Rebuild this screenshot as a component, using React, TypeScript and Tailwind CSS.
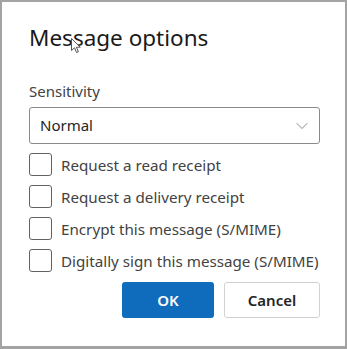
import { ChevronDown } from 'lucide-react'

const OPTIONS = [
  'Request a read receipt',
  'Request a delivery receipt',
  'Encrypt this message (S/MIME)',
  'Digitally sign this message (S/MIME)',
]

export default function App() {
  return (
    <div className="w-[347px] h-[349px] bg-[#a3a3a3] pl-[2px] pt-[2px] pr-[2px] pb-[3px]" style={{ fontFamily: '"Noto Sans", "Open Sans", sans-serif' }}>
      <div className="relative w-full h-full bg-white pl-[27px] pr-[25px] pt-[21px] text-[#242424]">
        <h1 className="text-[22.5px] leading-[30px] font-normal text-[#1a1a1a]">Message options</h1>

        <div className="mt-[28px] text-[15px] leading-[20px] text-[#424242]">Sensitivity</div>

        <div className="mt-[6px] h-[37px] border border-[#8a8a8a] rounded-[3px] flex items-center justify-between pl-[10px] pr-[7px]">
          <span className="text-[15px] text-[#242424]">Normal</span>
          <ChevronDown size={20} strokeWidth={0.9} className="text-[#616161]" />
        </div>

        <div className="mt-[9px] flex flex-col gap-[9px]">
          {OPTIONS.map((label) => (
            <label key={label} className="flex items-center gap-[9px] h-[23px]">
              <span className="w-[23px] h-[23px] border border-[#616161] rounded-[3px] shrink-0" />
              <span className="text-[15.2px] leading-[20px] text-[#424242] whitespace-nowrap">{label}</span>
            </label>
          ))}
        </div>

        <div className="mt-[10px] flex justify-end gap-[10px]">
          <button className="w-[92px] h-[36px] bg-[#0f6cbd] rounded-[3px] text-white text-[15px] font-semibold">OK</button>
          <button className="w-[96px] h-[36px] bg-white border border-[#d1d1d1] rounded-[3px] text-[#242424] text-[15px] font-semibold">Cancel</button>
        </div>

        {/* mouse pointer */}
        <svg className="absolute left-[69px] top-[36px]" width="10" height="16" viewBox="0 0 10 16">
          <path d="M0.5 0.5 L0.5 12.5 L3.5 9.8 L5.6 14.6 L7.4 13.8 L5.4 9.2 L9.3 9.2 Z" fill="white" stroke="#555" strokeWidth="1" />
        </svg>
      </div>
    </div>
  )
}
